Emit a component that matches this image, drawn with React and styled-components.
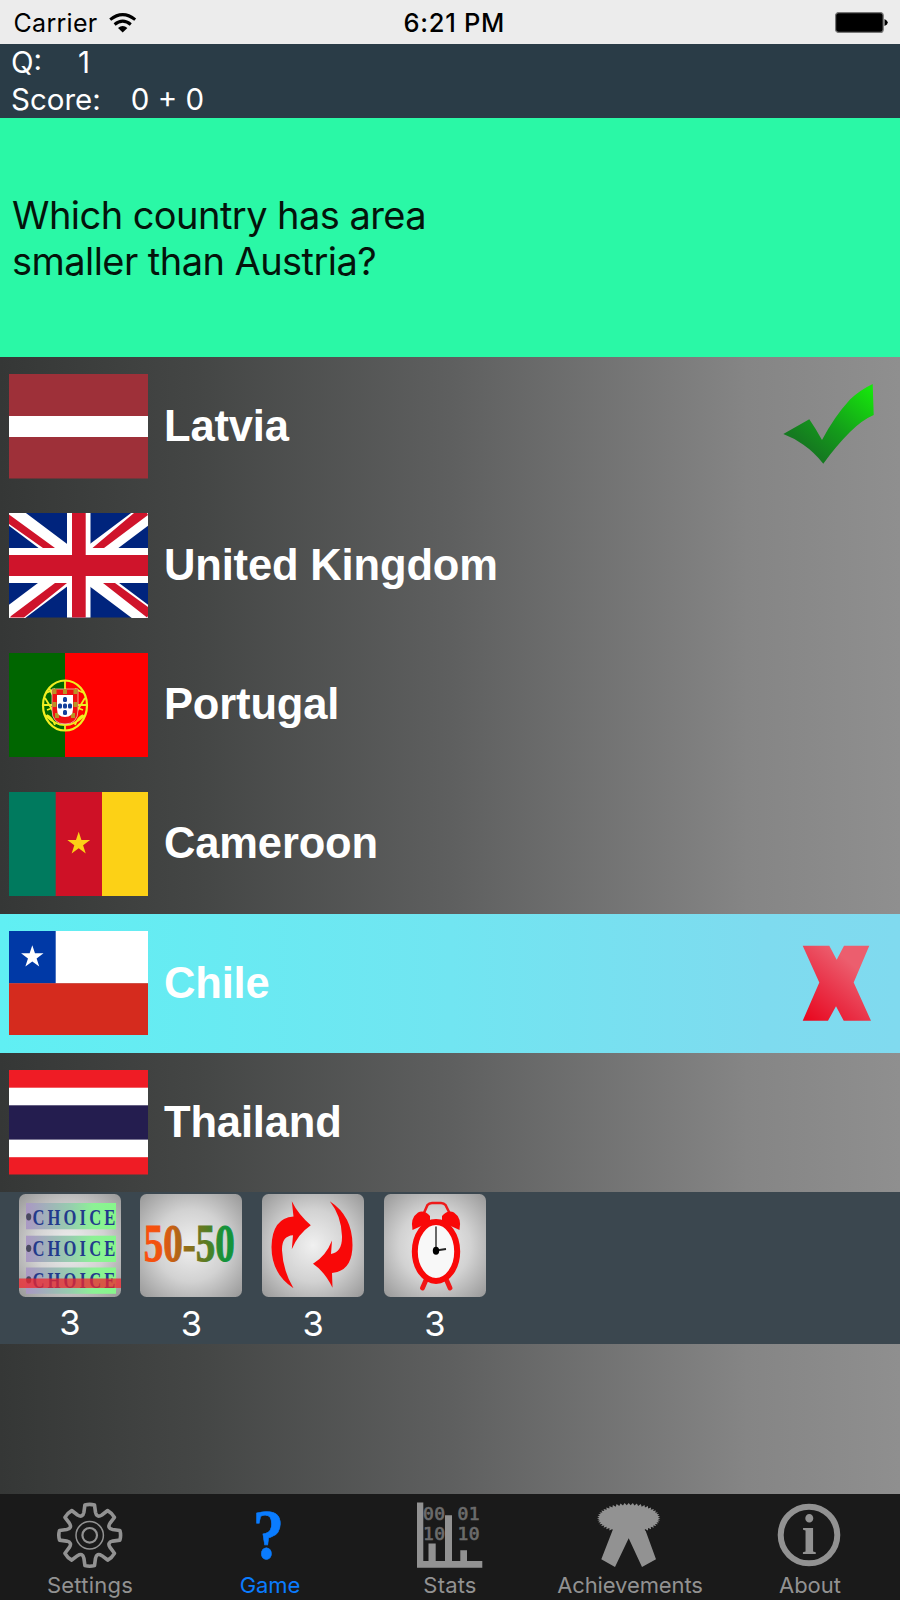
import React from 'react';
import styled, { createGlobalStyle } from 'styled-components';

const GlobalStyle = createGlobalStyle`
  html, body { margin: 0; padding: 0; }
  body { width: 900px; height: 1600px; overflow: hidden; }
  svg { display: block; flex: none; }
`;

const Screen = styled.div`
  width: 900px;
  height: 1600px;
  display: flex;
  flex-direction: column;
  font-family: Inter, "Liberation Sans", sans-serif;
  background: linear-gradient(90deg, #353736 0%, #444645 22%, #5e5f5f 50%, #858585 83%, #8f8f8f 100%);
`;

const StatusBar = styled.header`
  height: 43.5px;
  flex: none;
  box-sizing: border-box;
  padding: 2px 12px 0 13.5px;
  display: grid;
  grid-template-columns: 1fr auto 1fr;
  align-items: center;
  background: #ececec;
  color: #000;
  font-size: 25px;
  line-height: 40px;
`;

const Carrier = styled.div`
  display: flex;
  align-items: center;
  gap: 11.5px;
  letter-spacing: 0.3px;
`;

const Clock = styled.div`
  font-weight: 500;
  font-size: 25.5px;
  letter-spacing: 0.7px;
  padding-left: 7px;
`;

const BatterySlot = styled.div`
  justify-self: end;
`;

const ScorePanel = styled.section`
  height: 74px;
  flex: none;
  box-sizing: border-box;
  padding-left: 11px;
  background: #2a3c47;
  color: #fff;
  font-size: 29.5px;
  line-height: 37.6px;
`;

const ScoreLine = styled.div`
  display: flex;
  height: 37px;
  gap: ${(p) => p.$gap}px;
  letter-spacing: ${(p) => p.$spacing || 0}px;
`;

const Question = styled.section`
  height: 239.5px;
  flex: none;
  box-sizing: border-box;
  padding: 2px 12px 0;
  display: flex;
  align-items: center;
  background: #2af8a6;
  color: #04140b;
  font-size: 38px;
  line-height: 46.3px;
  letter-spacing: -0.55px;
`;

const Answers = styled.ul`
  list-style: none;
  margin: 0;
  padding: 0;
  flex: none;
`;

const Answer = styled.li`
  height: 139.15px;
  box-sizing: border-box;
  padding-left: 9px;
  display: flex;
  align-items: center;
  gap: 16px;
  background: ${(p) => (p.$selected ? 'linear-gradient(90deg, #60eff3 0%, #71e5f1 50%, #7edbef 85%, #80daef 100%)' : 'none')};
`;

const Country = styled.span`
  flex: 1;
  color: #fff;
  font: bold 43.5px/50px "Liberation Sans", Arial, sans-serif;
  letter-spacing: -0.15px;
  padding-bottom: 1px;
`;

const Toolbar = styled.section`
  height: 152px;
  flex: none;
  box-sizing: border-box;
  padding: 1.7px 0 0 18.8px;
  display: flex;
  gap: 19.7px;
  background: #3b474f;
`;

const Tool = styled.div`
  width: 102px;
  display: flex;
  flex-direction: column;
  align-items: center;
`;

const ToolCount = styled.span`
  margin-top: ${(p) => p.$drop}px;
  color: #fff;
  font-size: 34.5px;
  line-height: 42px;
`;

const Spacer = styled.div`
  flex: 1;
`;

const TabBar = styled.nav`
  height: 106.5px;
  flex: none;
  display: grid;
  grid-template-columns: repeat(5, 180px);
  background: #1a1a1a;
`;

const Tab = styled.div`
  padding-top: 5px;
  display: flex;
  flex-direction: column;
  align-items: center;
  color: ${(p) => (p.$active ? '#0a7cff' : '#929292')};
`;

const TabLabel = styled.span`
  margin-top: -2px;
  font-size: 22px;
  line-height: 32px;
  letter-spacing: ${(p) => p.$spacing}px;
`;

const starPoints = (cx, cy, r) =>
  Array.from({ length: 10 }, (_, i) => {
    const a = (Math.PI / 5) * i - Math.PI / 2;
    const d = i % 2 ? r * 0.385 : r;
    return `${(cx + d * Math.cos(a)).toFixed(2)},${(cy + d * Math.sin(a)).toFixed(2)}`;
  }).join(' ');

const FlagSvg = ({ children }) => (
  <svg width="139" height="104.5" viewBox="0 0 139 104.5">{children}</svg>
);

const Latvia = () => (
  <FlagSvg>
    <rect width="139" height="104.5" fill="#9e3039" />
    <rect y="42" width="139" height="21" fill="#fff" />
  </FlagSvg>
);

const UnitedKingdom = () => (
  <FlagSvg>
    <rect width="139" height="104.5" fill="#00247d" />
    <path d="M0 0L139 104.5M139 0L0 104.5" stroke="#fff" strokeWidth="20.300" />
    <path
      d="M0 1.500V11L34 35H46L0 1.500ZM138 0H125L83.500 35H95L139 2ZM1 104.500H15L58 70H46L2 103ZM139 103V94L106 70H94L138 104.500Z"
      fill="#cf142b"
    />
    <rect x="58" width="23.500" height="104.5" fill="#fff" />
    <rect y="35" width="139" height="35" fill="#fff" />
    <rect x="63" width="13.700" height="104.5" fill="#cf142b" />
    <rect y="42" width="139" height="21" fill="#cf142b" />
  </FlagSvg>
);

const Portugal = () => (
  <FlagSvg>
    <rect width="139" height="104.5" fill="#f00" />
    <rect width="56" height="104.5" fill="#060" />
    <g fill="none" stroke="#f0ee20" strokeWidth="1.8">
      <ellipse cx="56" cy="52.500" rx="22" ry="25" strokeWidth="2.200" />
      <path d="M34 52H78M56 27.500V77.500M37 40L46 36M75 40L66 36M36 62Q56 82 76 62M40 35L47 48M36 45L44 58M38 62Q43 64 46 72M76 45L68 58M74 62Q69 64 66 72M38 57L46 54M74 57L66 54" />
    </g>
    <path d="M43 36H69V57Q69 71 56 71Q43 71 43 57Z" fill="#f01010" stroke="#f0c8b0" strokeWidth=".8" />
    <g fill="#b89424">
      <rect x="43.500" y="36" width="4" height="5" /><rect x="54" y="36" width="4" height="5" /><rect x="64.500" y="36" width="4" height="5" />
      <rect x="43.500" y="49" width="4" height="5" /><rect x="64.500" y="49" width="4" height="5" />
      <rect x="46" y="60" width="4" height="5" /><rect x="62" y="60" width="4" height="5" />
    </g>
    <path d="M48 42H64V56Q64 64 56 64Q48 64 48 56Z" fill="#fff" />
    <g fill="#123f9c">
      <rect x="54" y="44" width="4" height="5" rx="1.500" /><rect x="54" y="50.500" width="4" height="5" rx="1.500" /><rect x="54" y="57" width="4" height="5" rx="1.500" />
      <rect x="49" y="50.500" width="4" height="5" rx="1.500" /><rect x="59" y="50.500" width="4" height="5" rx="1.500" />
    </g>
  </FlagSvg>
);

const Cameroon = () => (
  <FlagSvg>
    <rect width="47" height="104.5" fill="#007a5e" />
    <rect x="46.700" width="46.500" height="104.5" fill="#ce1126" />
    <rect x="93" width="46" height="104.5" fill="#fcd116" />
    <polygon points={starPoints(69.7, 51.7, 12)} fill="#fcd116" />
  </FlagSvg>
);

const Chile = () => (
  <FlagSvg>
    <rect width="139" height="52.500" fill="#fff" />
    <rect width="46.700" height="52.500" fill="#0039a6" />
    <rect y="52.200" width="139" height="52.300" fill="#d52b1e" />
    <polygon points={starPoints(23.3, 26, 11.8)} fill="#fff" />
  </FlagSvg>
);

const Thailand = () => (
  <FlagSvg>
    <rect width="139" height="104.5" fill="#ef1c25" />
    <rect y="17.700" width="139" height="69.500" fill="#fff" />
    <rect y="35.300" width="139" height="34.300" fill="#241d4f" />
  </FlagSvg>
);

const CheckMark = () => (
  <svg width="120" height="139" viewBox="0 0 120 139">
    <defs>
      <linearGradient id="check" gradientUnits="userSpaceOnUse" x1="38" y1="98" x2="92" y2="32">
        <stop offset="0" stopColor="#157a20" />
        <stop offset=".35" stopColor="#149a1b" />
        <stop offset="1" stopColor="#16e60c" />
      </linearGradient>
    </defs>
    <path d="M3.300 77L29.300 62.300Q36 72 42 83Q54 60 70 42.500Q80 33 92.700 27L93.700 58Q82 63 70 75Q56 89 43.300 106.700Q34 95 23 87.500Q14 81 3.300 77Z" fill="url(#check)" />
  </svg>
);

const CrossMark = () => (
  <svg width="120" height="139" viewBox="0 0 120 139">
    <defs>
      <linearGradient id="cross" gradientUnits="userSpaceOnUse" x1="24" y1="106" x2="72" y2="50">
        <stop offset="0" stopColor="#e9061d" />
        <stop offset=".5" stopColor="#e93046" />
        <stop offset="1" stopColor="#ec5e6e" />
      </linearGradient>
    </defs>
    <path d="M22.700 31.800H49.300L56.700 45.800L64 31.800H89.300L73.700 68.500L91 106.800H63.700L56 92.200L48 106.800H22.700L39.300 68.500Z" fill="url(#cross)" />
  </svg>
);

const ToolTile = ({ id, children }) => (
  <svg width="102" height="103" viewBox="0 0 102 103">
    <defs>
      <radialGradient id={id} cx=".5" cy=".5" r=".7">
        <stop offset="0" stopColor="#f0f0f0" />
        <stop offset=".5" stopColor="#d2d2d2" />
        <stop offset="1" stopColor="#989898" />
      </radialGradient>
    </defs>
    <rect width="102" height="103" rx="6.500" fill={`url(#${id})`} />
    {children}
  </svg>
);

const ChoiceIcon = () => (
  <ToolTile id="tileA">
    <defs>
      <linearGradient id="stripe">
        <stop offset="0" stopColor="#aa98c4" />
        <stop offset=".5" stopColor="#96ceae" />
        <stop offset=".75" stopColor="#8cf295" />
        <stop offset="1" stopColor="#86f78b" />
      </linearGradient>
    </defs>
    {[9, 41.7, 73.5].map((y, i) => (
      <g key={y}>
        <rect x="7" y={y} width="90" height="26.300" fill="url(#stripe)" />
        <ellipse cx="9.700" cy={22.8 + i * 31.5} rx="2.600" ry="3.600" fill="#49495f" />
        <g transform={`translate(13.5 ${30.7 + i * 31.5}) scale(.72 1)`}>
          <text fill="#233a8c" fontFamily="Liberation Serif, serif" fontWeight="bold" fontSize="23" textLength="115" lengthAdjust="spacing">CHOICE</text>
        </g>
      </g>
    ))}
    <rect y="84.500" width="102" height="9.500" fill="#f0242c" opacity=".75" />
  </ToolTile>
);

const FiftyIcon = () => (
  <ToolTile id="tileB">
    <defs>
      <linearGradient id="fifty" gradientUnits="userSpaceOnUse" x1="4" y1="0" x2="95" y2="0">
        <stop offset="0" stopColor="#ff4d0c" />
        <stop offset=".2" stopColor="#ec5510" />
        <stop offset=".42" stopColor="#a26a18" />
        <stop offset=".7" stopColor="#557d24" />
        <stop offset=".88" stopColor="#14933a" />
        <stop offset="1" stopColor="#14933a" />
      </linearGradient>
    </defs>
    <text x="3.800" y="66.500" fill="url(#fifty)" stroke="url(#fifty)" strokeWidth="1" fontFamily="Liberation Serif, serif" fontWeight="bold" fontSize="53" textLength="91" lengthAdjust="spacingAndGlyphs">50-50</text>
  </ToolTile>
);

const SwapIcon = () => (
  <ToolTile id="tileC">
    <g fill="#f90808">
      <path d="M29.800 7.200Q36 20 48.800 31.200Q36 40 29.800 55.200L31 41.300Q19.500 42 20 56.500Q21 77 31.500 94.200Q9.500 80 9.500 53Q10 24 31.500 22.500Z" />
      <path d="M67.800 7.200Q90.500 22 90.500 51Q90.500 77 70 79L70.500 93.800Q63 78 51 69.800Q64 62 70 46.500L69 60Q80.500 58 80 42Q79.500 22 67.800 7.200Z" />
    </g>
  </ToolTile>
);

const AlarmIcon = () => (
  <ToolTile id="tileD">
    <path d="M39.500 20L43.500 11Q45 9 48 9H57Q60 9 61.500 11L66 20" fill="none" stroke="#ee1a1a" strokeWidth="2.500" />
    <g fill="#f90808">
      <path d="M28.500 36Q26 24 34 18.500Q40 15.500 46 22V28Z" />
      <path d="M75.500 36Q78 24 70 18.500Q64 15.500 58 22V28Z" />
    </g>
    <path d="M42 86L38.500 94M62.500 86L66 94" stroke="#f01616" strokeWidth="4.800" strokeLinecap="round" />
    <ellipse cx="52" cy="57.500" rx="21.200" ry="29.500" fill="#f8f8f8" stroke="#f90808" strokeWidth="6" />
    <path d="M52 32.500V57" stroke="#444" strokeWidth="1.600" />
    <path d="M52 56.500L62 55" stroke="#222" strokeWidth="2" />
    <ellipse cx="52" cy="56.800" rx="3.200" ry="4" fill="#000" />
  </ToolTile>
);

const TabSvg = ({ children }) => (
  <svg width="70" height="72" viewBox="0 0 70 72" overflow="visible">{children}</svg>
);

const gearPath = (() => {
  const at = (deg, r, off) => {
    const a = (deg * Math.PI) / 180;
    const x = r * Math.cos(a) - off * Math.sin(a);
    const y = r * Math.sin(a) + off * Math.cos(a);
    return `${x.toFixed(2)} ${y.toFixed(2)}`;
  };
  let d = '';
  for (let t = 0; t < 8; t += 1) {
    const a = t * 45;
    d += `${t ? 'L' : 'M'}${at(a, 23, -5.8)}L${at(a, 30.2, -4.8)}Q${at(a, 31.6, 0)} ${at(a, 30.2, 4.8)}L${at(a, 23, 5.8)}`;
    d += `Q${at(a + 22.5, 18.5, 0)} ${at(a + 45, 23, -5.8)}`;
  }
  return `${d}Z`;
})();

const GearIcon = () => (
  <TabSvg>
    <g transform="translate(34.700 36.300)" fill="none" stroke="currentColor">
      <path d={gearPath} strokeWidth="3.600" strokeLinejoin="round" />
      <circle r="13.700" strokeWidth="1.500" />
      <circle r="7.300" strokeWidth="2.200" />
    </g>
  </TabSvg>
);

const QuestionIcon = () => (
  <TabSvg>
    <g transform="translate(33.500 59.500) scale(.87 1)">
      <text textAnchor="middle" fill="currentColor" stroke="currentColor" strokeWidth=".6" fontFamily="Liberation Serif, serif" fontWeight="bold" fontSize="72">?</text>
    </g>
  </TabSvg>
);

const StatsIcon = () => (
  <TabSvg>
    <g fill="#6c6c6c" stroke="#6c6c6c" strokeWidth=".7" fontFamily="DejaVu Sans Mono, monospace" fontSize="18">
      <text x="8" y="21.300" textLength="22">00</text>
      <text x="42.500" y="21.300" textLength="22">01</text>
      <text x="8" y="41.300" textLength="22">10</text>
      <text x="42.500" y="41.300" textLength="22">10</text>
    </g>
    <path d="M2 3.500H8.300V62H13.500V44.500H20.700V62H30V16.300H37V62H45.300V51.300H52V62H67.300V68.700H2Z" fill="currentColor" />
  </TabSvg>
);

const rosette = Array.from({ length: 96 }, (_, i) => {
  const a = (i * Math.PI) / 48;
  const k = i % 2 ? 0 : 2.4;
  return `${(33.7 + (29.3 + k) * Math.cos(a)).toFixed(2)},${(19.3 + (13 + k) * Math.sin(a)).toFixed(2)}`;
}).join(' ');

const RibbonIcon = () => (
  <TabSvg>
    <g fill="currentColor">
      <polygon points={rosette} />
      <path d="M17.300 32L6.300 60.300L20 68L33.700 39.300L47 68L61 60.300L50.700 32L46 28H21Z" />
    </g>
  </TabSvg>
);

const InfoIcon = () => (
  <TabSvg>
    <circle cx="34" cy="36" r="28.300" fill="none" stroke="currentColor" strokeWidth="6" />
    <g transform="translate(34.200 54.500) scale(.95 1)">
      <text textAnchor="middle" fill="currentColor" fontFamily="Liberation Serif, serif" fontWeight="bold" fontSize="56">i</text>
    </g>
  </TabSvg>
);

const WifiIcon = () => (
  <svg width="28" height="20" viewBox="0 0 28 20">
    <g fill="none" stroke="#000" strokeWidth="3">
      <path d="M1.200 6.700Q13.700 -3.400 26.200 6.700" />
      <path d="M5.600 11.500Q13.700 4.800 21.800 11.500" />
    </g>
    <path d="M9 14.900Q13.700 11.300 18.400 14.900L13.700 19.400Z" fill="#000" />
  </svg>
);

const BatteryIcon = () => (
  <svg width="53" height="21" viewBox="0 0 53 21">
    <rect x=".6" y=".6" width="47.600" height="19.800" rx="3" fill="#000" stroke="#777" strokeWidth="1.200" />
    <path d="M49.500 7Q52.800 8.500 52.800 10.500T49.500 14Z" fill="#000" />
  </svg>
);

const answers = [
  { name: 'Latvia', Flag: Latvia, Mark: CheckMark },
  { name: 'United Kingdom', Flag: UnitedKingdom },
  { name: 'Portugal', Flag: Portugal },
  { name: 'Cameroon', Flag: Cameroon },
  { name: 'Chile', Flag: Chile, Mark: CrossMark, selected: true },
  { name: 'Thailand', Flag: Thailand },
];

const tools = [
  { id: 'choice', Icon: ChoiceIcon, count: 3, drop: 5 },
  { id: 'fifty', Icon: FiftyIcon, count: 3, drop: 6.3 },
  { id: 'swap', Icon: SwapIcon, count: 3, drop: 6.3 },
  { id: 'alarm', Icon: AlarmIcon, count: 3, drop: 6.3 },
];

const tabs = [
  { label: 'Settings', Icon: GearIcon, spacing: 0.25 },
  { label: 'Game', Icon: QuestionIcon, spacing: -0.1, active: true },
  { label: 'Stats', Icon: StatsIcon, spacing: 0.2 },
  { label: 'Achievements', Icon: RibbonIcon, spacing: -0.1 },
  { label: 'About', Icon: InfoIcon, spacing: 0 },
];

export default function App() {
  return (
    <>
      <GlobalStyle />
      <Screen>
        <StatusBar>
          <Carrier>Carrier <WifiIcon /></Carrier>
          <Clock>6:21 PM</Clock>
          <BatterySlot><BatteryIcon /></BatterySlot>
        </StatusBar>
        <ScorePanel>
          <ScoreLine $gap={36}><span>Q:</span><span>1</span></ScoreLine>
          <ScoreLine $gap={30}><span>Score:</span><span>0 + 0</span></ScoreLine>
        </ScorePanel>
        <Question>
          <div>Which country has area<br />smaller than Austria?</div>
        </Question>
        <Answers>
          {answers.map(({ name, Flag, Mark, selected }) => (
            <Answer key={name} $selected={selected}>
              <Flag />
              <Country>{name}</Country>
              {Mark && <Mark />}
            </Answer>
          ))}
        </Answers>
        <Toolbar>
          {tools.map(({ id, Icon, count, drop }) => (
            <Tool key={id}>
              <Icon />
              <ToolCount $drop={drop}>{count}</ToolCount>
            </Tool>
          ))}
        </Toolbar>
        <Spacer />
        <TabBar>
          {tabs.map(({ label, Icon, spacing, active }) => (
            <Tab key={label} $active={active}>
              <Icon />
              <TabLabel $spacing={spacing}>{label}</TabLabel>
            </Tab>
          ))}
        </TabBar>
      </Screen>
    </>
  );
}
